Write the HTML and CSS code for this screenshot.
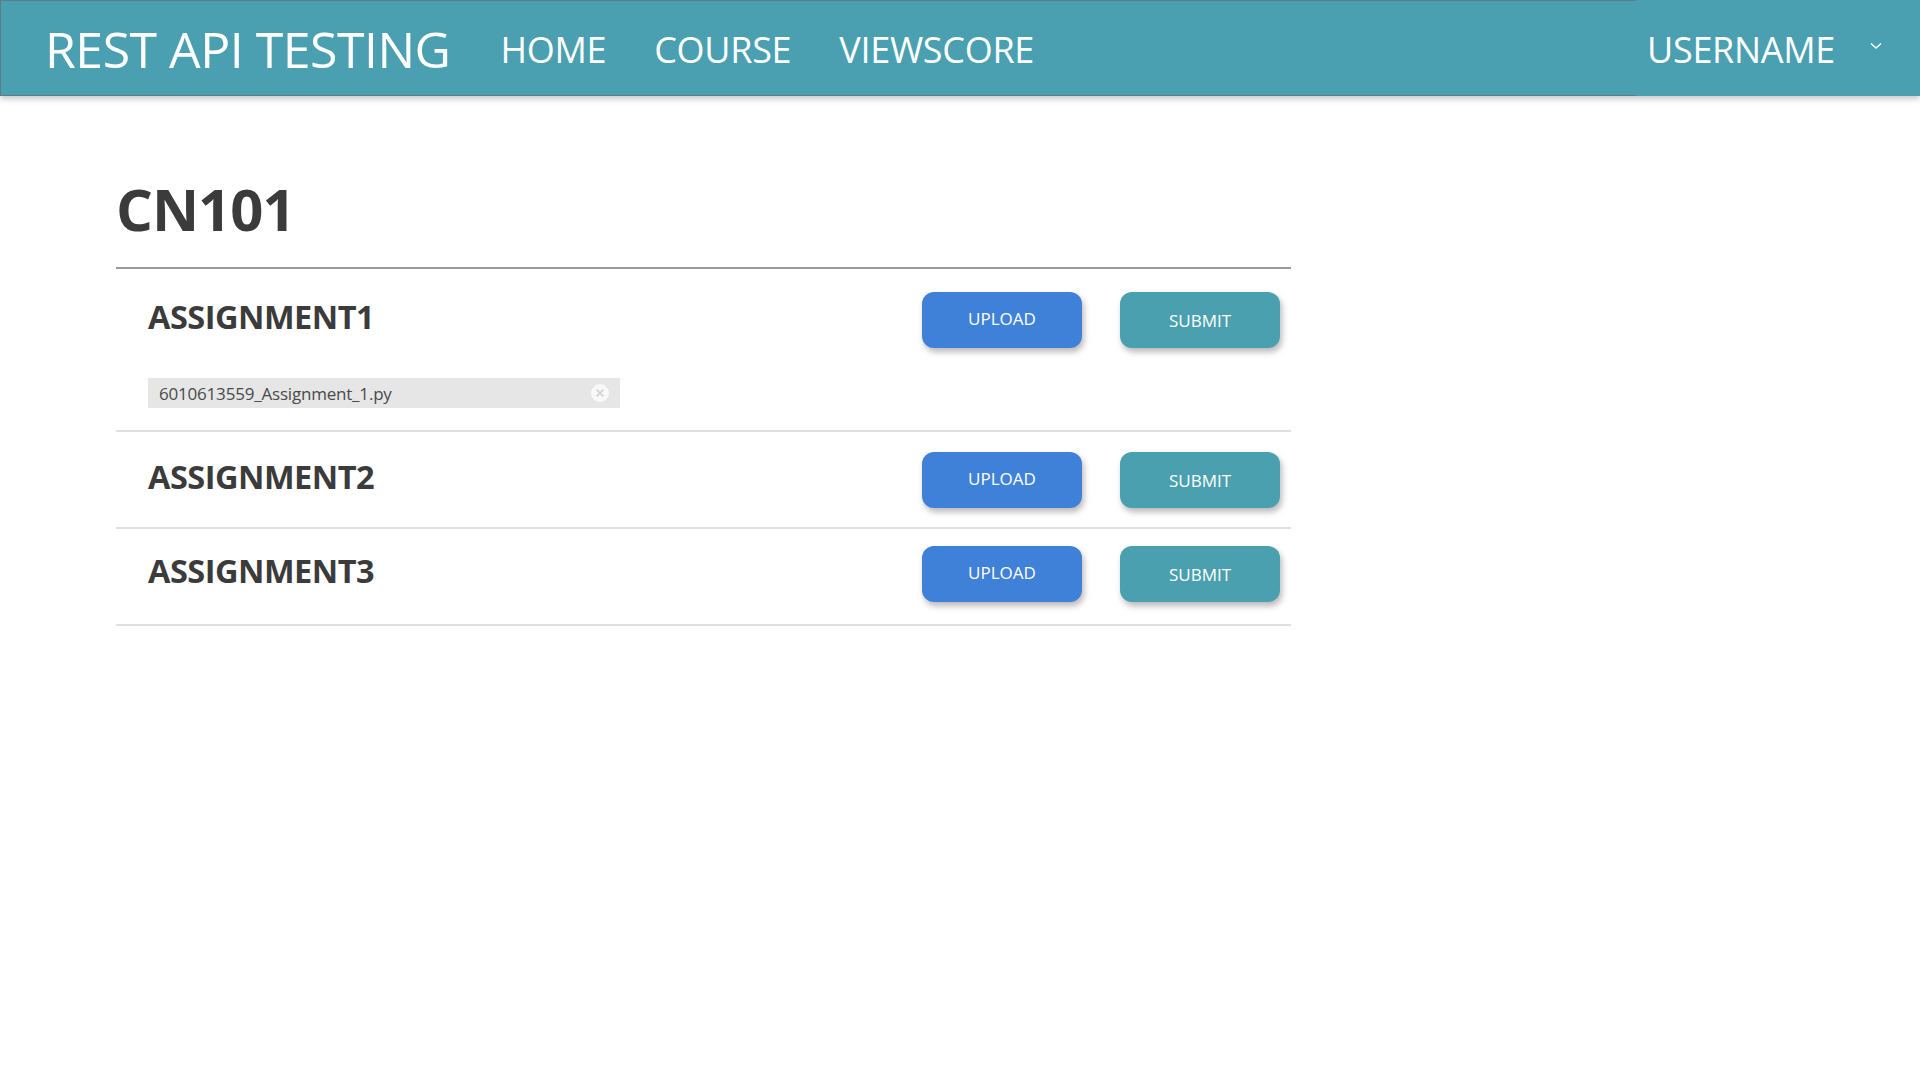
FILE: index.html
```html
<!DOCTYPE html>
<html>
<head>
<meta charset="utf-8">
<title>REST API TESTING</title>
<link rel="stylesheet" href="styles.css">
</head>
<body>
<nav class="navbar">
  <div class="nav-left">
    <a class="brand">REST API TESTING</a>
    <a class="nav-link">HOME</a>
    <a class="nav-link">COURSE</a>
    <a class="nav-link">VIEWSCORE</a>
  </div>
  <div class="user-menu">
    <span class="user-name">USERNAME</span>
    <svg class="chevron" width="12" height="8" viewBox="0 0 12 8"><path d="M1 1.5 L6 6 L11 1.5" fill="none" stroke="#ffffff" stroke-width="1.4"/></svg>
  </div>
</nav>

<main class="content">
  <h1 class="course-title">CN101</h1>
  <div class="list">
    <section class="assignment first">
      <div class="row">
        <h2 class="assign-name">ASSIGNMENT1</h2>
        <div class="actions">
          <button class="btn btn-upload">UPLOAD</button>
          <button class="btn btn-submit">SUBMIT</button>
        </div>
      </div>
      <div class="file-chip">
        <span class="file-name">6010613559_Assignment_1.py</span>
        <svg class="file-remove" width="18" height="18" viewBox="0 0 18 18"><circle cx="9" cy="9" r="9" fill="#f8f8f8"/><path d="M5.6 5.6 L12.4 12.4 M12.4 5.6 L5.6 12.4" stroke="#d6d6d6" stroke-width="2"/></svg>
      </div>
    </section>
    <section class="assignment">
      <div class="row">
        <h2 class="assign-name">ASSIGNMENT2</h2>
        <div class="actions">
          <button class="btn btn-upload">UPLOAD</button>
          <button class="btn btn-submit">SUBMIT</button>
        </div>
      </div>
    </section>
    <section class="assignment last">
      <div class="row">
        <h2 class="assign-name">ASSIGNMENT3</h2>
        <div class="actions">
          <button class="btn btn-upload">UPLOAD</button>
          <button class="btn btn-submit">SUBMIT</button>
        </div>
      </div>
    </section>
  </div>
</main>
</body>
</html>
```
FILE: styles.css
```css
* { box-sizing: border-box; }
html, body { margin: 0; padding: 0; background: #ffffff; }
body {
  font-family: "Open Sans", "Noto Sans", "Liberation Sans", sans-serif;
  color: #3b3b3b;
}

.navbar {
  display: flex;
  align-items: stretch;
  height: 96px;
  background: #4aa0b0;
  border: 1px solid #5d7c84;
  box-shadow: 0 3px 6px rgba(0, 0, 0, 0.22);
}
.nav-left {
  display: flex;
  align-items: center;
  flex: 1;
  padding-left: 44px;
}
.brand {
  color: #ffffff;
  font-size: 50px;
  letter-spacing: -0.5px;
  margin-right: 50px;
  margin-top: 2px;
}
.nav-link {
  color: #ffffff;
  font-size: 36px;
  margin-right: 48px;
  letter-spacing: -0.3px;
  margin-top: 2px;
}
.user-menu {
  display: flex;
  align-items: center;
  width: 284px;
  margin: -1px -1px -1px 0;
  background: #4aa0b0;
  padding-left: 11px;
}
.user-name {
  color: #ffffff;
  font-size: 36px;
  letter-spacing: -0.3px;
  margin-top: 2px;
}
.chevron { margin-left: 35px; margin-top: -4px; }

.content {
  padding: 84px 0 0 116px;
  width: 1291px;
}
.course-title {
  margin: 0;
  font-size: 58px;
  font-weight: 700;
  line-height: 1;
  letter-spacing: -1px;
  padding-bottom: 29px;
  border-bottom: 2px solid #9a9a9a;
}
.assignment {
  border-bottom: 2px solid #e0e0e0;
  padding: 20px 11px 19px 32px;
}
.assignment.first { padding-top: 23px; padding-bottom: 22px; }
.assignment.last { padding-top: 17px; padding-bottom: 22px; }
.row {
  display: flex;
  align-items: center;
  justify-content: space-between;
}
.assign-name {
  margin: 0;
  font-size: 32.5px;
  font-weight: 700;
  letter-spacing: -0.5px;
  margin-top: -8px;
}
.actions { display: flex; gap: 38px; }
.btn {
  width: 160px;
  height: 56px;
  border: none;
  border-radius: 12px;
  color: #ffffff;
  font-family: "Open Sans", "Noto Sans", sans-serif;
  font-size: 17px;
  box-shadow: 2px 4px 6px rgba(0, 0, 0, 0.28);
  padding: 0;
}
.btn-upload { background: #3f80d8; padding-bottom: 4px; }
.btn-submit { background: #4aa0ae; }

.file-chip {
  display: flex;
  align-items: center;
  justify-content: space-between;
  width: 472px;
  height: 30px;
  margin-top: 30px;
  background: #e6e6e6;
  padding: 0 11px 0 11px;
}
.file-name { font-size: 17px; color: #4a4a4a; letter-spacing: -0.2px; }
```
